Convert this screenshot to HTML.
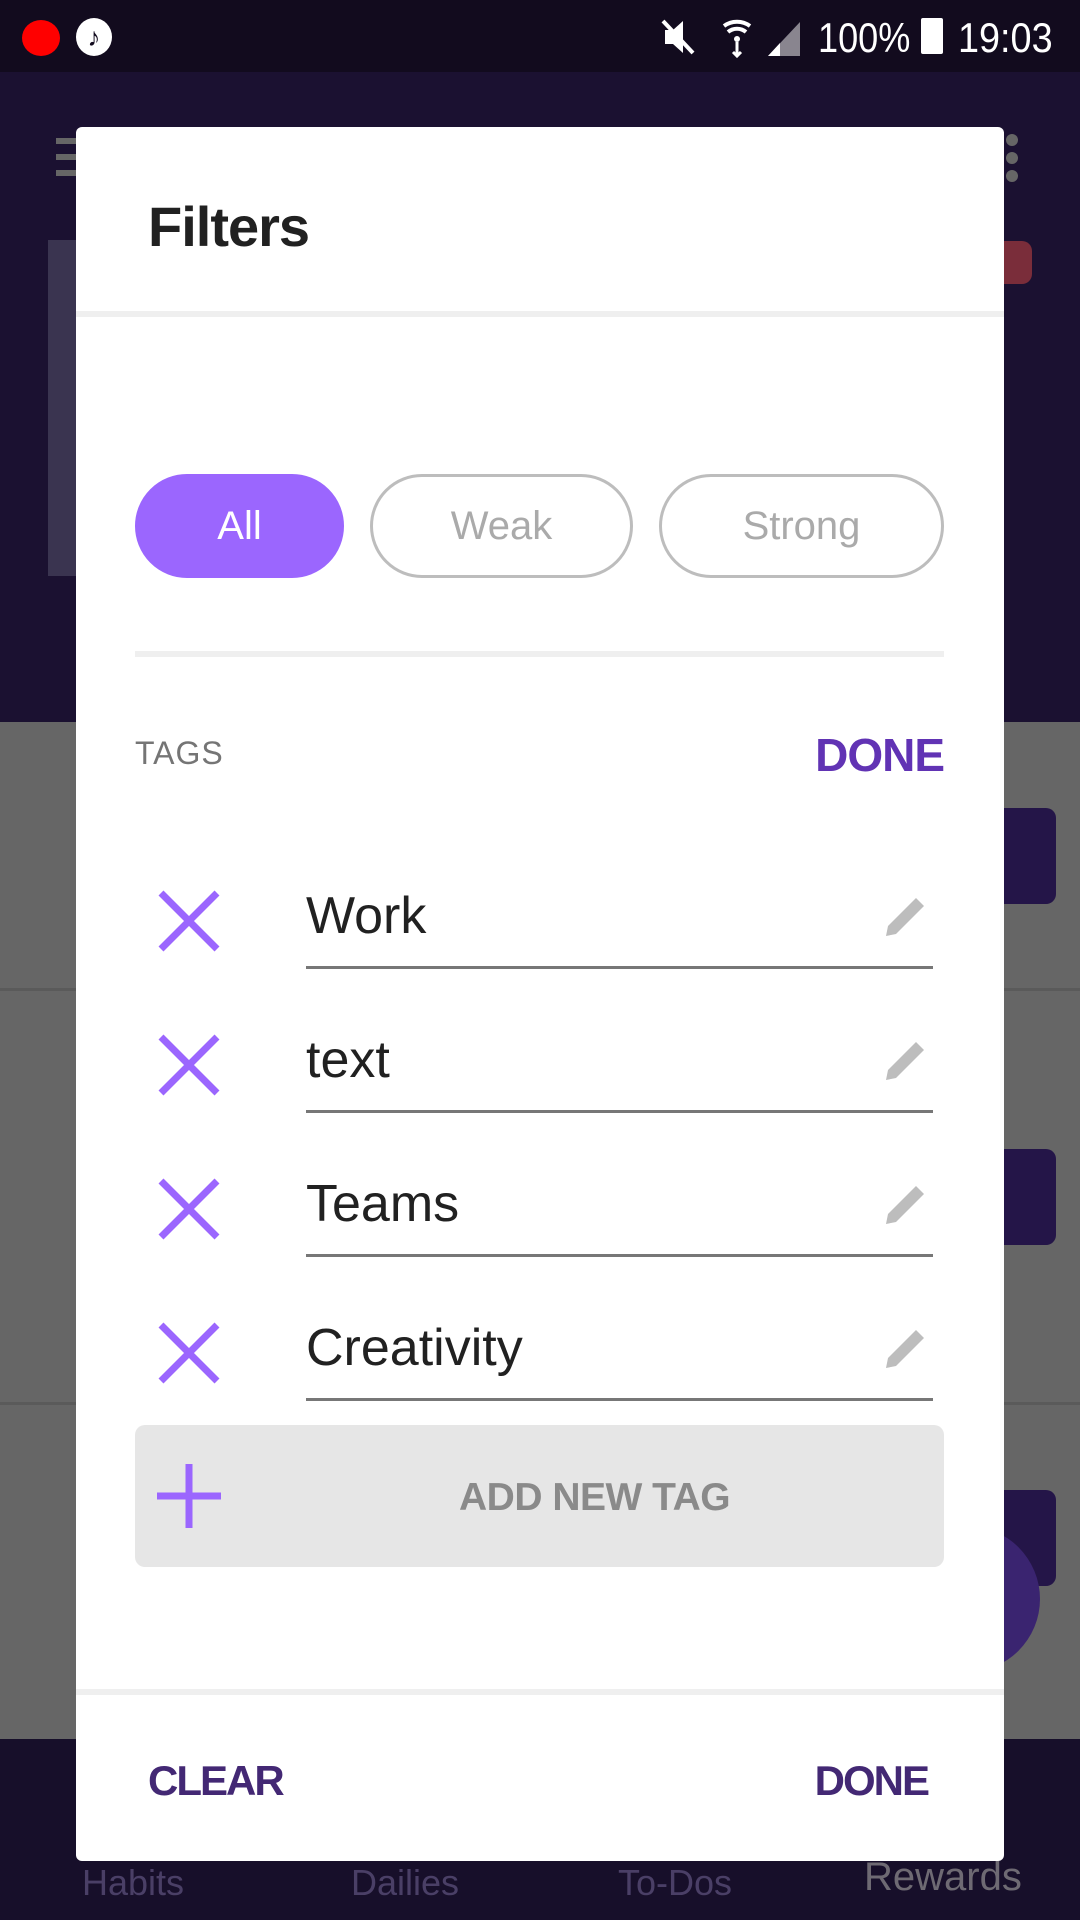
<!DOCTYPE html>
<html><head><meta charset="utf-8"><style>
*{margin:0;padding:0;box-sizing:border-box}
body{width:1080px;height:1920px;position:relative;overflow:hidden;font-family:"Liberation Sans",sans-serif;background:#666}
.a{position:absolute}
.chip{position:absolute;top:474px;height:104px;border-radius:52px;border:3px solid #bdbdbd;color:#aaa;font-size:40px;display:flex;align-items:center;justify-content:center}
.row .t{position:absolute;left:306px;font-size:52px;color:#212121}
.ul{position:absolute;left:306px;width:627px;height:3px;background:#777}
.nav{position:absolute;top:1862px;font-size:36px;color:#4a3f66}
</style></head><body>
<div class="a" style="left:0;top:0;width:1080px;height:72px;background:#120b1e"></div>
<div class="a" style="left:22px;top:20px;width:38px;height:36px;border-radius:50%;background:#f00"></div>
<div class="a" style="left:76px;top:18px;width:36px;height:38px;border-radius:50%;background:#fff;color:#120b1e;font-size:26px;text-align:center;line-height:38px;font-weight:bold">♪</div>
<div class="a" style="left:818px;top:14px;color:#fff;font-size:42px;transform:scaleX(.86);transform-origin:left">100%</div>
<div class="a" style="left:921px;top:18px;width:22px;height:36px;background:#fff;border-radius:2px"></div>
<div class="a" style="left:958px;top:14px;color:#fff;font-size:42px;transform:scaleX(.9);transform-origin:left">19:03</div>
<svg class="a" style="left:660px;top:16px" width="150" height="42"><path d="M5 14h8l10-9v32l-10-9H5z" fill="#fff"/><path d="M3 5l30 32" stroke="#fff" stroke-width="4"/><path d="M64 10a22 22 0 0 1 26 0M68 16a14 14 0 0 1 18 0" stroke="#fff" stroke-width="4" fill="none"/><circle cx="77" cy="23" r="3" fill="#fff"/><path d="M77 26v14M73 36l4 4 4-4" stroke="#fff" stroke-width="3" fill="none"/><path d="M108 40L140 6v34z" fill="#fff" opacity=".5"/><path d="M108 40l12-13v13z" fill="#fff"/></svg>
<div class="a" style="left:0;top:72px;width:1080px;height:650px;background:#1b1131"></div>
<div class="a" style="left:56px;top:138px;width:22px;height:6px;background:#666"></div>
<div class="a" style="left:56px;top:154px;width:22px;height:6px;background:#666"></div>
<div class="a" style="left:56px;top:170px;width:22px;height:6px;background:#666"></div>
<div class="a" style="left:1006px;top:134px;width:12px;height:12px;border-radius:50%;background:#666"></div>
<div class="a" style="left:1006px;top:152px;width:12px;height:12px;border-radius:50%;background:#666"></div>
<div class="a" style="left:1006px;top:170px;width:12px;height:12px;border-radius:50%;background:#666"></div>
<div class="a" style="left:990px;top:241px;width:42px;height:43px;border-radius:10px;background:#7a2d3a"></div>
<div class="a" style="left:48px;top:240px;width:32px;height:336px;background:#3a3450"></div>
<div class="a" style="left:0;top:1739px;width:1080px;height:181px;background:#170f2a"></div>
<div class="a" style="left:1004px;top:808px;width:52px;height:96px;background:#241548;border-radius:0 10px 10px 0"></div>
<div class="a" style="left:1004px;top:1149px;width:52px;height:96px;background:#241548;border-radius:0 10px 10px 0"></div>
<div class="a" style="left:1004px;top:1490px;width:52px;height:96px;background:#241548;border-radius:0 10px 10px 0"></div>
<div class="a" style="left:0;top:988px;width:1080px;height:3px;background:#5a5a5a"></div>
<div class="a" style="left:0;top:1402px;width:1080px;height:3px;background:#5a5a5a"></div>
<div class="a" style="left:894px;top:1526px;width:146px;height:146px;border-radius:50%;background:#3a2470"></div>
<div class="nav" style="left:82px">Habits</div>
<div class="nav" style="left:351px">Dailies</div>
<div class="nav" style="left:618px">To-Dos</div>
<div class="nav" style="left:864px;top:1855px;font-size:40px;color:#6e6a73">Rewards</div>

<div class="a" style="left:76px;top:127px;width:928px;height:1734px;background:#fff;border-radius:6px"></div>
<div class="a" style="left:148px;top:194px;font-size:56px;font-weight:bold;color:#212121;letter-spacing:-1px">Filters</div>
<div class="a" style="left:76px;top:311px;width:928px;height:6px;background:#efefef"></div>
<div class="chip" style="left:135px;width:209px;background:#9b66fe;border-color:#9b66fe;color:#fff">All</div>
<div class="chip" style="left:370px;width:263px">Weak</div>
<div class="chip" style="left:659px;width:285px">Strong</div>
<div class="a" style="left:135px;top:651px;width:809px;height:6px;background:#efefef"></div>
<div class="a" style="left:135px;top:735px;font-size:32px;color:#757575;letter-spacing:1px">TAGS</div>
<div class="a" style="right:136px;top:728px;font-size:46px;font-weight:bold;color:#6133b4;letter-spacing:-1px">DONE</div>

<div class="row">
<svg class="a" style="left:157px;top:889px" width="64" height="64"><path d="M4 4l56 56M60 4L4 60" stroke="#9b66fe" stroke-width="7"/></svg>
<div class="t" style="top:886px">Work</div><div class="ul" style="top:966px"></div>
<svg class="a" style="left:884px;top:894px" width="44" height="44"><path d="M2 42l2-10L32 4l8 8L12 40z" fill="#bdbdbd"/></svg>

<svg class="a" style="left:157px;top:1033px" width="64" height="64"><path d="M4 4l56 56M60 4L4 60" stroke="#9b66fe" stroke-width="7"/></svg>
<div class="t" style="top:1030px">text</div><div class="ul" style="top:1110px"></div>
<svg class="a" style="left:884px;top:1038px" width="44" height="44"><path d="M2 42l2-10L32 4l8 8L12 40z" fill="#bdbdbd"/></svg>

<svg class="a" style="left:157px;top:1177px" width="64" height="64"><path d="M4 4l56 56M60 4L4 60" stroke="#9b66fe" stroke-width="7"/></svg>
<div class="t" style="top:1174px">Teams</div><div class="ul" style="top:1254px"></div>
<svg class="a" style="left:884px;top:1182px" width="44" height="44"><path d="M2 42l2-10L32 4l8 8L12 40z" fill="#bdbdbd"/></svg>

<svg class="a" style="left:157px;top:1321px" width="64" height="64"><path d="M4 4l56 56M60 4L4 60" stroke="#9b66fe" stroke-width="7"/></svg>
<div class="t" style="top:1318px">Creativity</div><div class="ul" style="top:1398px"></div>
<svg class="a" style="left:884px;top:1326px" width="44" height="44"><path d="M2 42l2-10L32 4l8 8L12 40z" fill="#bdbdbd"/></svg>
</div>

<div class="a" style="left:135px;top:1425px;width:809px;height:142px;background:#e6e6e6;border-radius:10px"></div>
<svg class="a" style="left:157px;top:1464px" width="64" height="64"><path d="M32 0v64M0 32h64" stroke="#9b66fe" stroke-width="7"/></svg>
<div class="a" style="left:459px;top:1476px;font-size:39px;font-weight:bold;color:#8a8a8a;letter-spacing:-0.5px">ADD NEW TAG</div>
<div class="a" style="left:76px;top:1689px;width:928px;height:6px;background:#efefef"></div>
<div class="a" style="left:148px;top:1757px;font-size:42px;font-weight:bold;color:#432874;letter-spacing:-2px">CLEAR</div>
<div class="a" style="right:152px;top:1757px;font-size:42px;font-weight:bold;color:#432874;letter-spacing:-2px">DONE</div>
</body></html>
